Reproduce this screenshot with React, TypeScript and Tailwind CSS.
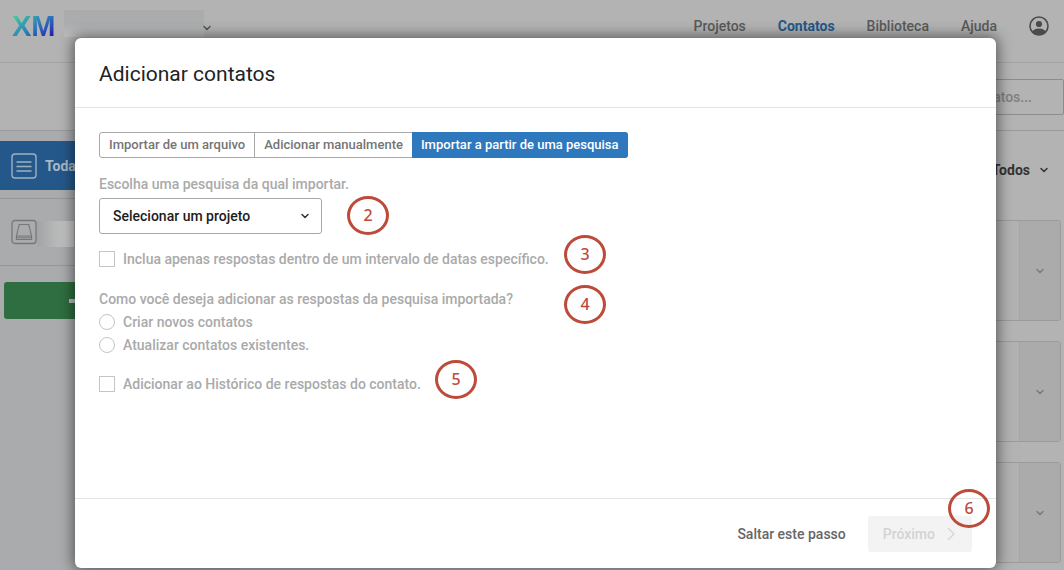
import { useState } from "react";
import type { ReactNode } from "react";
import { ChevronDown } from "lucide-react";
import clsx from "clsx";

const NAV_ITEMS = ["Projetos", "Contatos", "Biblioteca", "Ajuda"];

const TABS = [
  "Importar de um arquivo",
  "Adicionar manualmente",
  "Importar a partir de uma pesquisa",
];

function Logo() {
  return (
    <a
      href="#"
      className="block bg-linear-to-br from-[#45c49a] from-15% via-[#2f80bb] via-50% to-[#2c1cae] to-85% bg-clip-text text-[29px] leading-8 font-bold text-transparent font-['Liberation_Sans',Arial,sans-serif]"
    >
      XM
    </a>
  );
}

function UserIcon() {
  return (
    <svg viewBox="0 0 20 20" className="size-5 text-[#4b4b4b]" aria-hidden="true">
      <clipPath id="user-clip">
        <circle cx="10" cy="10" r="9" />
      </clipPath>
      <circle cx="10" cy="10" r="9" fill="none" stroke="currentColor" strokeWidth="1.6" />
      <circle cx="10" cy="8" r="3.1" fill="currentColor" />
      <ellipse cx="10" cy="17" rx="7.4" ry="4.4" fill="currentColor" clipPath="url(#user-clip)" />
    </svg>
  );
}

function ListIcon() {
  return (
    <svg viewBox="0 0 26 26" className="size-[26px]" fill="none" stroke="#9fb0c0" aria-hidden="true">
      <rect x="1" y="1" width="24" height="24" rx="3" strokeWidth="1.4" />
      <path d="M5.5 9h15M5.5 13.5h15M5.5 18h15" strokeWidth="1.3" />
    </svg>
  );
}

function DriveIcon() {
  return (
    <svg viewBox="0 0 26 26" className="size-[26px]" fill="none" stroke="#777" aria-hidden="true">
      <rect x="1" y="1.5" width="24" height="23" rx="3" strokeWidth="1.3" />
      <path d="M8.2 5.5h9.6l2.8 11.5v3.5H5.4V17zM5.4 17h15.2M5.4 18.8h15.2" strokeWidth="1.1" />
    </svg>
  );
}

function NextArrow() {
  return (
    <svg viewBox="0 0 8 14" className="h-[14px] w-2" fill="none" stroke="currentColor" aria-hidden="true">
      <path d="M1 1l6 6-6 6" strokeWidth="1.2" />
    </svg>
  );
}

function Header() {
  return (
    <header className="flex h-[63px] items-start justify-between border-b border-[#a3a3a3] pr-[15px] pl-3">
      <div className="flex items-start">
        <div className="w-[43px] pt-[10px]">
          <Logo />
        </div>
        <div className="mt-[10px] ml-[9px] h-[27px] w-[140px] bg-linear-to-b from-[#a9abad] via-[#abadad] to-[#bebebe]" />
        <ChevronDown className="mt-[22px] -ml-[3px] size-3 text-[#555]" strokeWidth={3} />
      </div>
      <nav className="flex items-center gap-8 pt-4 text-sm font-medium text-[#5a5a5a]">
        {NAV_ITEMS.map((item) => (
          <a
            key={item}
            href="#"
            className={clsx(item === "Contatos" && "font-bold text-[#24588a]")}
          >
            {item}
          </a>
        ))}
        <button aria-label="Conta">
          <UserIcon />
        </button>
      </nav>
    </header>
  );
}

function Sidebar() {
  return (
    <aside className="w-60 shrink-0 bg-[#a9abad] pt-[10px]">
      <a href="#" className="flex h-[49px] items-center gap-2 bg-[#24588a] pl-[11px] text-sm font-bold text-[#a9b8c6]">
        <ListIcon />
        Todas
      </a>
      <div className="mt-2 flex h-[68px] items-center border-y border-[#979797] pl-[11px]">
        <DriveIcon />
        <div className="mt-1 h-[26px] w-[37px] bg-linear-to-r from-[#a3a4a5] to-[#cacaca]" />
      </div>
      <button
        aria-label="Criar lista"
        className="mt-4 ml-1 flex h-[37px] w-[146px] items-center justify-center rounded-[3px] bg-[#2f6e40]"
      >
        <span className="h-1 w-4 bg-[#b4bfb7]" />
      </button>
    </aside>
  );
}

function ContactList() {
  return (
    <main className="flex flex-1 flex-col pr-[3px]">
      <div className="flex h-[77px] items-center justify-end pr-[11px]">
        <button className="flex items-center gap-2 text-sm font-bold text-[#333]">
          Todos
          <ChevronDown className="size-3" strokeWidth={3} />
        </button>
      </div>
      <div className="flex flex-col gap-5 pt-3">
        {[1, 2, 3].map((id) => (
          <div
            key={id}
            className="flex h-[101px] justify-end overflow-hidden rounded-[3px] border border-[#9b9b9b] bg-[#b1b1b1]"
          >
            <button
              aria-label="Abrir contato"
              className="flex w-[41px] items-center justify-center border-l border-[#a5a5a5] bg-[#ababab] text-[#7a7a7a]"
            >
              <ChevronDown className="size-3" strokeWidth={3} />
            </button>
          </div>
        ))}
      </div>
    </main>
  );
}

function StepBadge({ step, className }: { step: number; className: string }) {
  return (
    <span
      className={clsx(
        "absolute flex h-[39px] w-[42px] items-center justify-center rounded-[50%] border-3 border-[#bc4b3a] pb-0.5 text-base leading-none font-medium text-[#bc4b3a] font-['Noto_Sans',sans-serif]",
        className,
      )}
    >
      {step}
    </span>
  );
}

interface OptionProps {
  type: "checkbox" | "radio";
  name?: string;
  className?: string;
  children: ReactNode;
}

function Option({ type, name, className, children }: OptionProps) {
  return (
    <label className={clsx("flex items-center gap-2", className)}>
      <input
        type={type}
        name={name}
        className={clsx(
          "size-4 appearance-none border border-[#c4c4c4] bg-white checked:bg-[#2e78bd]",
          type === "radio" && "rounded-full",
        )}
      />
      {children}
    </label>
  );
}

function AddContactsModal() {
  const [tab, setTab] = useState(2);

  return (
    <section
      role="dialog"
      aria-labelledby="modal-title"
      className="relative flex flex-1 flex-col rounded-md bg-white shadow-[0_0_14px_2px_rgba(0,0,0,0.5)]"
    >
      <div className="flex h-[70px] items-center border-b border-[#e4e4e4] px-6 pt-0.5">
        <h1 id="modal-title" className="text-[21px] leading-7 text-[#222]">
          Adicionar contatos
        </h1>
      </div>

      <div className="flex flex-1 flex-col items-start px-6 pt-6 text-sm font-medium text-[#aaa]">
        <div className="flex h-[26px] rounded-[3px] border border-[#a8a8a8] text-[13px] text-[#757575]">
          {TABS.map((label, index) => (
            <button
              key={label}
              onClick={() => setTab(index)}
              className={clsx(
                "px-[9px] whitespace-nowrap",
                index === 1 && "border-l border-[#a8a8a8]",
                index === tab && "-my-px -mr-px rounded-r-[3px] bg-[#2e78bd] text-white",
              )}
            >
              {label}
            </button>
          ))}
        </div>

        <label htmlFor="project" className="mt-4">
          Escolha uma pesquisa da qual importar.
        </label>
        <div className="relative mt-1">
          <select
            id="project"
            className="h-9 w-[223px] appearance-none rounded-[3px] border border-[#a8a8a8] bg-white pl-[13px] text-[#1c1c1c]"
          >
            <option>Selecionar um projeto</option>
          </select>
          <ChevronDown
            className="pointer-events-none absolute top-3 right-[11px] size-3 text-[#333]"
            strokeWidth={3}
          />
        </div>

        <Option type="checkbox" className="mt-[15px]">
          Inclua apenas respostas dentro de um intervalo de datas específico.
        </Option>

        <fieldset className="mt-5">
          <legend>Como você deseja adicionar as respostas da pesquisa importada?</legend>
          <Option type="radio" name="mode" className="mt-[3px]">
            Criar novos contatos
          </Option>
          <Option type="radio" name="mode" className="mt-[3px]">
            Atualizar contatos existentes.
          </Option>
        </fieldset>

        <Option type="checkbox" className="mt-[19px]">
          Adicionar ao Histórico de respostas do contato.
        </Option>
      </div>

      <div className="flex h-[70px] items-center justify-end border-t border-[#e4e4e4] px-6 text-sm font-medium">
        <button className="text-[#666]">Saltar este passo</button>
        <button
          disabled
          className="ml-[22px] flex h-9 items-center gap-3 rounded-[3px] bg-[#f3f3f3] pr-[17px] pl-[15px] text-[#d3d3d3]"
        >
          Próximo
          <NextArrow />
        </button>
      </div>

      <StepBadge step={2} className="top-[158px] left-[272px]" />
      <StepBadge step={3} className="top-[197px] left-[489px]" />
      <StepBadge step={4} className="top-[247px] left-[489px]" />
      <StepBadge step={5} className="top-[322px] left-[360px]" />
      <StepBadge step={6} className="right-[6px] bottom-[40px]" />
    </section>
  );
}

export default function App() {
  return (
    <div className="relative flex min-h-screen flex-col bg-[#b3b3b3] font-[Roboto,sans-serif]">
      <Header />
      <div className="flex h-[68px] justify-end border-b border-[#9a9a9a] pt-4">
        <input
          type="search"
          aria-label="Procurar contatos"
          placeholder="Procurar contatos..."
          className="h-9 w-[200px] rounded-xs border border-[#8c8c8c] pl-[43px] text-sm font-medium placeholder:text-[#808080]"
        />
      </div>
      <div className="flex flex-1">
        <Sidebar />
        <ContactList />
      </div>

      <div className="absolute inset-0 flex pt-[38px] pr-[68px] pb-[2px] pl-[75px]">
        <AddContactsModal />
      </div>
    </div>
  );
}
